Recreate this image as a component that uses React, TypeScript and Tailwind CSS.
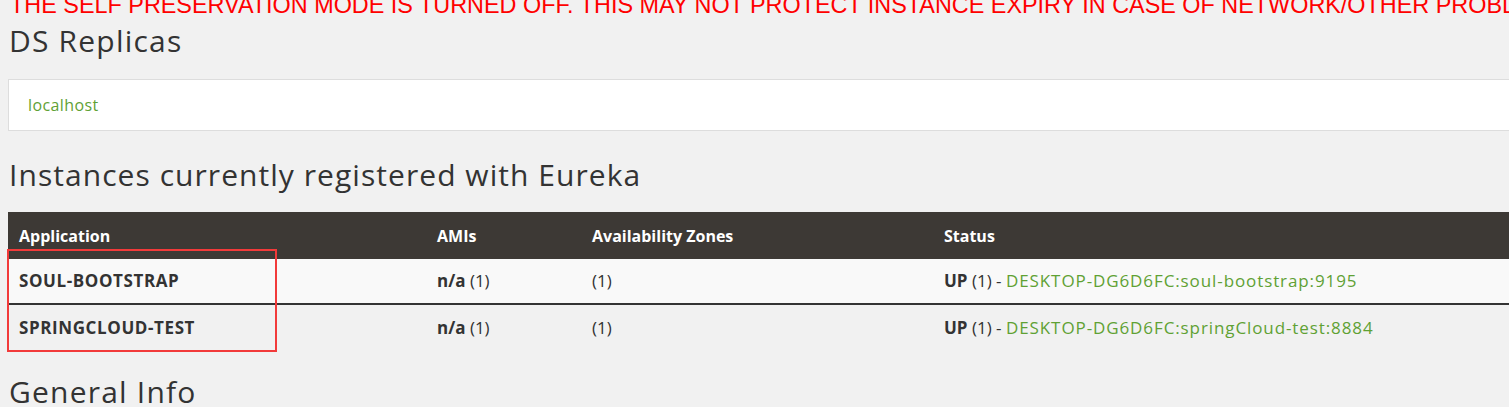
import React from "react";

const heading = { fontFamily: '"Open Sans", "Noto Sans", sans-serif' };

export default function App() {
  return (
    <div className="min-h-[407px] w-[1509px] overflow-hidden bg-[#f1f1f1] text-[#333]">
      <div className="relative pl-[8px]">
        <div
          className="-mt-[8px] h-[26px] whitespace-nowrap pl-[2px] text-[23.4px] leading-[26px] text-[#ff0000]"
          style={{ fontFamily: '"Liberation Sans", Arial, sans-serif' }}
        >
          THE SELF PRESERVATION MODE IS TURNED OFF. THIS MAY NOT PROTECT INSTANCE EXPIRY IN CASE OF NETWORK/OTHER PROBLEMS.
        </div>

        <h1
          className="mt-[1px] h-[44px] pl-[1px] text-[30px] leading-[44px] tracking-[1.2px] text-[#333]"
          style={heading}
        >
          DS Replicas
        </h1>

        <div className="mt-[16px] flex h-[52px] w-[1520px] items-center border border-[#dddddd] bg-white pl-[19px]">
          <a className="text-[16px] text-[#5fa134] tracking-[0.4px]" style={heading}>
            localhost
          </a>
        </div>

        <h1
          className="mt-[22px] h-[44px] pl-[1px] text-[30px] leading-[44px] tracking-[1.05px] text-[#333]"
          style={heading}
        >
          Instances currently registered with Eureka
        </h1>

        <div className="relative mt-[15px] w-[1520px]" style={heading}>
          <div className="grid h-[47px] grid-cols-[418px_155px_352px_1fr] items-center bg-[#3d3935] text-[16px] font-bold text-white">
            <div className="pl-[11px]">Application</div>
            <div className="pl-[11px]">AMIs</div>
            <div className="pl-[11px]">Availability Zones</div>
            <div className="pl-[11px]">Status</div>
          </div>

          <div className="grid h-[46px] grid-cols-[418px_155px_352px_1fr] items-center border-b-2 border-[#333] bg-[#f9f9f9] text-[17px] text-[#333]">
            <div className="pl-[11px] text-[17px] font-bold tracking-[0.6px]">SOUL-BOOTSTRAP</div>
            <div className="pl-[11px]">
              <b>n/a</b> (1)
            </div>
            <div className="pl-[11px]">(1)</div>
            <div className="pl-[11px]">
              <b>UP</b> (1) - <a className="text-[#5fa134] text-[17px] tracking-[0.9px]">DESKTOP-DG6D6FC:soul-bootstrap:9195</a>
            </div>
          </div>

          <div className="grid h-[45px] grid-cols-[418px_155px_352px_1fr] items-center bg-[#f1f1f1] text-[17px] text-[#333]">
            <div className="pl-[11px] text-[17px] font-bold tracking-[0.6px]">SPRINGCLOUD-TEST</div>
            <div className="pl-[11px]">
              <b>n/a</b> (1)
            </div>
            <div className="pl-[11px]">(1)</div>
            <div className="pl-[11px]">
              <b>UP</b> (1) - <a className="text-[#5fa134] text-[17px] tracking-[0.9px]">DESKTOP-DG6D6FC:springCloud-test:8884</a>
            </div>
          </div>

          <div className="pointer-events-none absolute left-[-1px] top-[37px] h-[103px] w-[270px] border-2 border-[#f23a3a]" />
        </div>

        <h1
          className="mt-[20px] h-[44px] pl-[1px] text-[30px] leading-[44px] tracking-[1.2px] text-[#333]"
          style={heading}
        >
          General Info
        </h1>
      </div>
    </div>
  );
}
